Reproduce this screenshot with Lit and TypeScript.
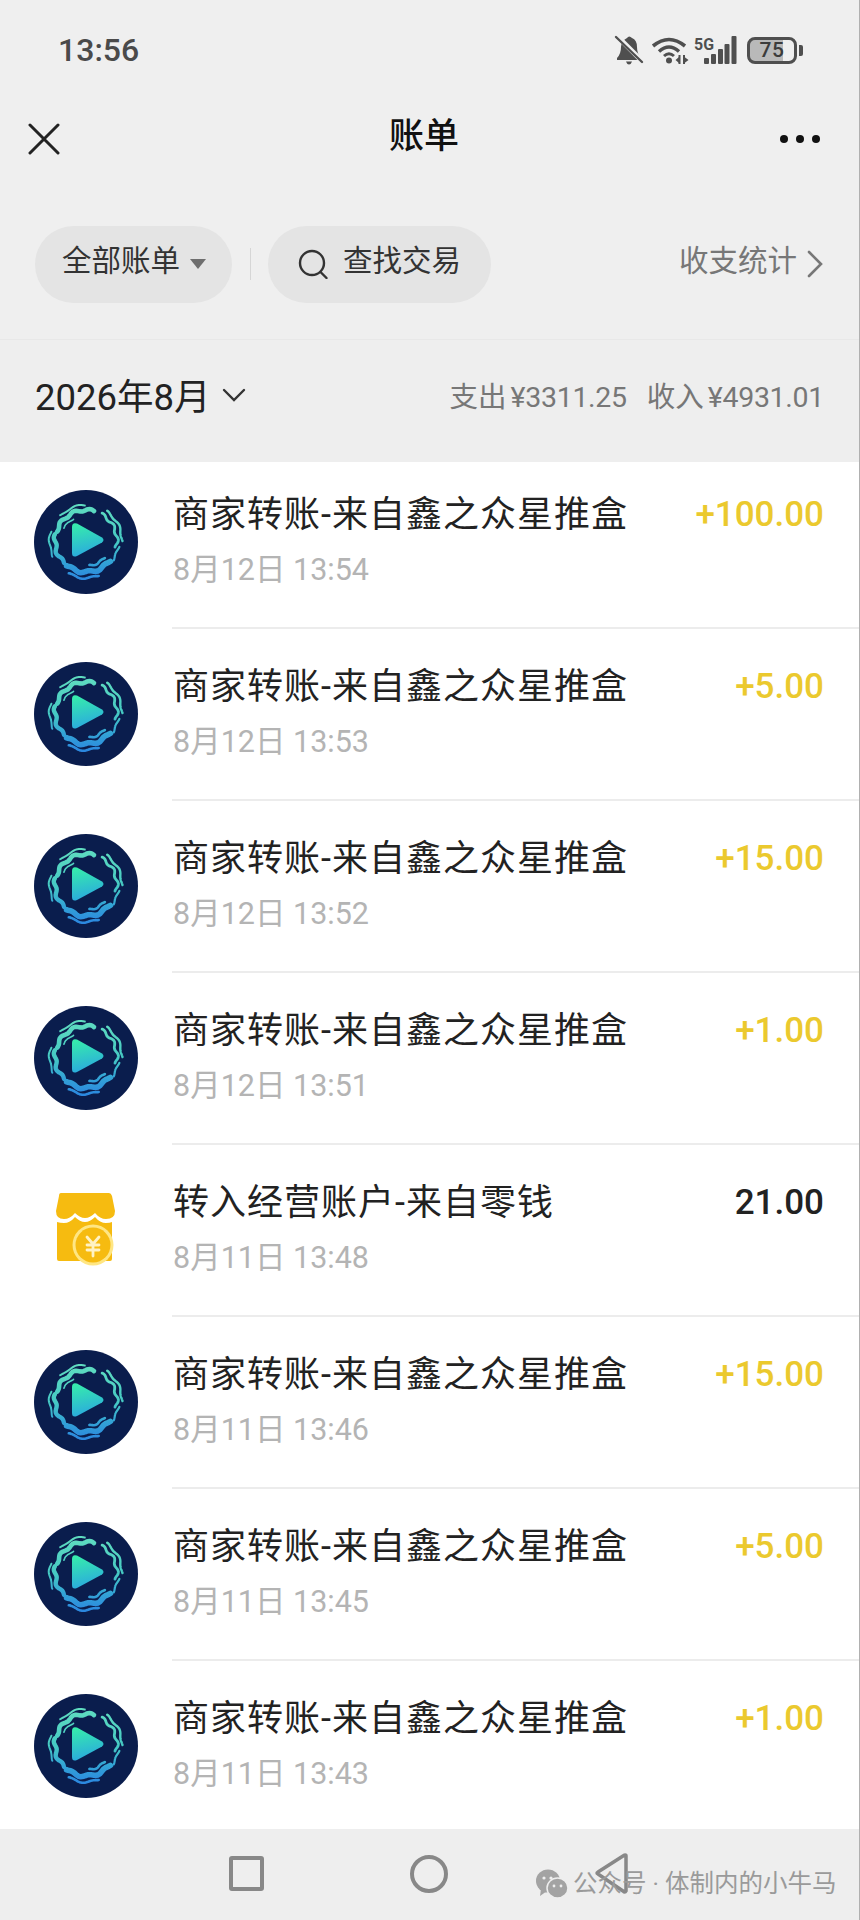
import { LitElement, html, css, svg } from "lit";
import { customElement } from "lit/decorators.js";

function wave(r: number, a: number, k: number, t0: number, t1: number, phase = 0): string {
  const pts: string[] = [];
  const n = 40;
  for (let i = 0; i <= n; i++) {
    const t = ((t0 + ((t1 - t0) * i) / n) * Math.PI) / 180;
    const rr = r + a * Math.sin(k * t + phase);
    pts.push(`${(52 + rr * Math.cos(t)).toFixed(1)},${(51 + rr * Math.sin(t)).toFixed(1)}`);
  }
  return "M" + pts.join("L");
}

const strands: [number, number, number, number, number, number, number][] = [
  [31, 1.2, 12, 198, 285, 0, 4.6],
  [36, 0.8, 10, 225, 268, 1, 2.0],
  [25.5, 0.6, 10, 210, 240, 1, 1.6],
  [31, 1.4, 13, 300, 372, 2, 2.8],
  [36, 1.0, 12, 305, 360, 0.5, 2.4],
  [31, 1.2, 11, 40, 128, 1, 5.6],
  [37, 1.0, 11, 70, 118, 2, 2.6],
  [25, 0.8, 12, 42, 82, 0, 2.6],
  [33, 1.0, 12, 10, 35, 0, 2.2],
  [31, 1.4, 12, 135, 192, 0, 4.4],
  [36.5, 0.8, 12, 155, 195, 1, 2.0],
];

let uid = 0;
function logo() {
  const id = `g${uid++}`;
  return html`<svg class="avatar" viewBox="0 0 104 104" aria-hidden="true">
    <defs>
      <linearGradient id="${id}r" gradientUnits="userSpaceOnUse" x1="52" y1="15" x2="52" y2="90">
        <stop offset="0" stop-color="#5fdcc0"></stop>
        <stop offset="0.5" stop-color="#45c9c4"></stop>
        <stop offset="0.75" stop-color="#33a4d6"></stop>
        <stop offset="1" stop-color="#2b86e0"></stop>
      </linearGradient>
      <linearGradient id="${id}p" x1="0.3" y1="0" x2="0.5" y2="1">
        <stop offset="0" stop-color="#36ecac"></stop>
        <stop offset="1" stop-color="#2aa8e0"></stop>
      </linearGradient>
    </defs>
    <circle cx="52" cy="52" r="52" fill="#0a1d4d"></circle>
    <g fill="none" stroke="url(#${id}r)" stroke-linecap="round">
      ${strands.map(
        (s) => svg`<path d="${wave(s[0], s[1], s[2], s[3], s[4], s[5])}" stroke-width="${s[6]}"></path>`
      )}
    </g>
    <path d="M43 33.500 L68 47.500 Q71 50 68 52.500 L43 66 Q38 68 38 63 L38 37 Q38 32 43 33.500Z" fill="url(#${id}p)"></path>
  </svg>`;
}

const shop = html`<svg class="shop" viewBox="0 0 60 74" aria-hidden="true">
  <path fill="#f6bb10" d="M5 1 H53 Q55 1 56 4 L59 19 Q59 27 50 27 Q44 27 39 21 Q34 26 29 26 Q24 26 19 21 Q14 27 8 27 Q0 27 0 19 L3 4 Q3 1 5 1Z"></path>
  <path fill="#f6bb10" d="M1 30 Q4 31 8 31 Q14 31 19 25 Q24 30 29 30 Q34 30 39 25 Q44 31 50 31 Q54 31 56 30 V67 Q56 69 54 69 H3 Q1 69 1 67Z"></path>
  <circle cx="37" cy="53" r="20.500" fill="#ffe683"></circle>
  <circle cx="37" cy="53" r="17.500" fill="#f6bb10"></circle>
  <path fill="none" stroke="#fff2c4" stroke-width="2.800" stroke-linecap="round" d="M31 45 L37 52 L43 45 M31 53 H43 M31 58 H43 M37 52 V64"></path>
</svg>`;

type Row = { title: string; date: string; amount: string; kind?: "shop" };
const T = "商家转账-来自鑫之众星推盒";
const rows: Row[] = [
  { title: T, date: "8月12日 13:54", amount: "+100.00" },
  { title: T, date: "8月12日 13:53", amount: "+5.00" },
  { title: T, date: "8月12日 13:52", amount: "+15.00" },
  { title: T, date: "8月12日 13:51", amount: "+1.00" },
  { title: "转入经营账户-来自零钱", date: "8月11日 13:48", amount: "21.00", kind: "shop" },
  { title: T, date: "8月11日 13:46", amount: "+15.00" },
  { title: T, date: "8月11日 13:45", amount: "+5.00" },
  { title: T, date: "8月11日 13:43", amount: "+1.00" },
];

@customElement("app-root")
export class AppRoot extends LitElement {
  static styles = css`
    :host {
      display: block;
      font-family: Roboto, "Noto Sans CJK SC", sans-serif;
    }
    .page {
      box-sizing: border-box;
      width: 860px;
      height: 1920px;
      display: flex;
      flex-direction: column;
      background: #efefef;
      border-right: 1px solid #b0b0b0;
      overflow: hidden;
    }
    .status {
      height: 100px;
      flex: none;
      display: flex;
      align-items: center;
      padding: 0 56px 0 58px;
    }
    .time {
      font-size: 32px;
      font-weight: 500;
      color: #4a4a4a;
      flex: 1;
    }
    .st-icons {
      display: flex;
      align-items: center;
    }
    .bell { width: 30px; height: 30px; margin-right: 7px; }
    .wifi { width: 38px; height: 28px; margin-right: 5px; }
    .net { width: 43px; height: 28px; margin-right: 10px; }
    .batt {
      box-sizing: border-box;
      width: 50px;
      height: 27px;
      border: 3px solid #4f4f4f;
      border-radius: 8px;
      background: linear-gradient(90deg, #b9b9b9 75%, transparent 75%);
      color: #3c3c3c;
      font-size: 21px;
      font-weight: 500;
      display: flex;
      align-items: center;
      justify-content: center;
      letter-spacing: 0.5px;
    }
    .nub {
      width: 4px;
      height: 11px;
      margin-left: 2px;
      background: #4f4f4f;
      border-radius: 0 2px 2px 0;
    }
    .nav {
      height: 80px;
      flex: none;
      display: grid;
      grid-template-columns: 1fr auto 1fr;
      align-items: center;
      padding: 0 39px 0 28px;
    }
    .nav svg { width: 32px; height: 32px; margin-top: -2px; }
    .title {
      font-size: 35px;
      line-height: 44px;
      font-weight: 500;
      color: #111;
      margin-top: -6px;
    }
    .dots { display: flex; gap: 8px; justify-content: flex-end; margin-top: -2px; }
    .dots i {
      width: 8px;
      height: 8px;
      border-radius: 50%;
      background: #111;
    }
    .filters {
      box-sizing: border-box;
      height: 160px;
      flex: none;
      padding: 46px 36px 37px 35px;
      display: flex;
      align-items: center;
      border-bottom: 1px solid #e8e8e8;
    }
    .pill {
      height: 77px;
      box-sizing: border-box;
      border-radius: 39px;
      background: #e4e4e4;
      display: flex;
      align-items: center;
      font-size: 29.500px;
      color: #333;
    }
    .lift { display: block; line-height: 40px; margin-top: -6px; }
    .p1 { width: 197px; padding-left: 27px; gap: 10px; }
    .caret {
      width: 0;
      height: 0;
      border-left: 8px solid transparent;
      border-right: 8px solid transparent;
      border-top: 10px solid #6e6e6e;
    }
    .vline {
      width: 1px;
      height: 32px;
      background: #d6d6d6;
      margin: 0 17px 0 18px;
    }
    .p2 { width: 223px; padding-left: 30px; gap: 15px; }
    .p2 svg { width: 30px; height: 30px; flex: none; }
    .stats {
      margin-left: auto;
      display: flex;
      align-items: center;
      gap: 10px;
      color: #777;
      font-size: 29.500px;
    }
    .stats svg { width: 16px; height: 28px; }
    .month {
      height: 122px;
      flex: none;
      display: flex;
      align-items: center;
      padding: 0 35px 14px 35px;
      box-sizing: border-box;
      background: #eeeeee;
    }
    .m-label {
      font-size: 36.500px;
      color: #222;
    }
    .m-chev { width: 24px; height: 14px; margin: 2px 0 0 11px; }
    .m-sum {
      margin-left: auto;
      display: flex;
      gap: 20px;
      font-size: 28.500px;
      color: #777;
    }
    .yen { margin-left: 4px; letter-spacing: -0.3px; }
    .list {
      flex: 1;
      min-height: 0;
      overflow: hidden;
      background: #fff;
    }
    .row {
      display: flex;
      height: 172px;
      box-sizing: border-box;
    }
    .row:first-child { height: 167px; }
    .ic {
      width: 172px;
      flex: none;
      padding: 33px 0 0 34px;
      box-sizing: border-box;
    }
    .row:first-child .ic { padding-top: 28px; }
    .avatar { display: block; width: 104px; height: 104px; }
    .shop { display: block; width: 60px; height: 74px; margin: 14px 0 0 22px; }
    .body {
      flex: 1;
      min-width: 0;
      box-sizing: border-box;
      padding: 33px 35px 0 1px;
      border-bottom: 2px solid #ececec;
      display: grid;
      grid-template-columns: 1fr auto;
      align-content: start;
    }
    .row:first-child .body { padding-top: 28px; }
    .row-title {
      font-size: 36px;
      line-height: 50px;
      letter-spacing: 1px;
      color: #222;
      white-space: nowrap;
    }
    .amt {
      font-size: 35px;
      line-height: 50px;
      font-weight: 500;
      color: #ebc92e;
    }
    .amt.plain { color: #222; }
    .date {
      grid-column: 1 / -1;
      margin-top: 10px;
      font-size: 30.500px;
      line-height: 40px;
      color: #b4b4b4;
    }
    .bottom {
      height: 91px;
      flex: none;
      position: relative;
      background: #eeeeee;
      display: flex;
      align-items: flex-start;
      padding: 27px 0 0 229px;
      box-sizing: border-box;
    }
    .sq {
      box-sizing: border-box;
      width: 35px;
      height: 35px;
      border: 4px solid #888;
      border-radius: 3px;
      margin-right: 146px;
    }
    .ci {
      box-sizing: border-box;
      width: 38px;
      height: 38px;
      border: 4px solid #888;
      border-radius: 50%;
      margin: -1px 145px 0 0;
    }
    .tri { width: 36px; height: 42px; margin-top: -3px; }
    .wm {
      position: absolute;
      left: 536px;
      top: 35px;
      display: flex;
      align-items: center;
      gap: 5px;
      font-size: 24.500px;
      color: #9a9a9a;
      white-space: nowrap;
    }
    .wm svg { width: 32px; height: 30px; margin-top: 5px; }
  `;

  render() {
    return html`<div class="page">
      <div class="status">
        <div class="time">13:56</div>
        <div class="st-icons">
          <svg class="bell" viewBox="0 0 30 30" aria-hidden="true">
            <path fill="#4f4f4f" d="M13 3 Q15 0 18 3 Q23 5 23 12 Q23 19 27 23 V25 H3 V23 Q7 19 7 12 Q7 6 13 3Z"></path>
            <path fill="#4f4f4f" d="M12 26.500 H18 Q17 29.500 15 29.500 Q13 29.500 12 26.500Z"></path>
            <path stroke="#efefef" stroke-width="5" d="M1 -1 L31 29"></path>
            <path stroke="#4f4f4f" stroke-width="2.400" stroke-linecap="round" d="M2 2 L28 27"></path>
          </svg>
          <svg class="wifi" viewBox="0 0 38 28" fill="none" aria-hidden="true">
            <path stroke="#4f4f4f" stroke-width="3.600" d="M2 10 Q18 -3 34 10"></path>
            <path stroke="#4f4f4f" stroke-width="3.400" d="M8 15.500 Q18 6.500 28 15.500"></path>
            <path stroke="#4f4f4f" stroke-width="3" d="M13 20 Q18 15.500 23 20"></path>
            <circle cx="18" cy="24.500" r="3" fill="#4f4f4f"></circle>
            <path stroke="#4f4f4f" stroke-width="2" d="M28.500 19 V28 M33 19 V28"></path>
            <path fill="#4f4f4f" d="M28 21 L24.500 24 L28 27Z M33.500 21 L37.500 24 L33.500 27Z"></path>
          </svg>
          <svg class="net" viewBox="0 0 43 28" aria-hidden="true">
            <text x="0" y="14" font-family="Roboto, sans-serif" font-size="16" font-weight="700" fill="#4f4f4f" textLength="20" lengthAdjust="spacingAndGlyphs">5G</text>
            <rect x="10" y="22" width="5" height="6" rx="1" fill="#4f4f4f"></rect>
            <rect x="17" y="18" width="5" height="10" rx="1" fill="#4f4f4f"></rect>
            <rect x="24" y="13" width="5" height="15" rx="1" fill="#4f4f4f"></rect>
            <rect x="30.500" y="8" width="5" height="20" rx="1" fill="#4f4f4f"></rect>
            <rect x="37.500" y="0" width="5" height="28" rx="1" fill="#4f4f4f"></rect>
          </svg>
          <div class="batt">75</div>
          <div class="nub"></div>
        </div>
      </div>

      <div class="nav">
        <svg viewBox="0 0 32 32" aria-hidden="true">
          <path d="M2 2 L30 30 M30 2 L2 30" stroke="#222" stroke-width="3" stroke-linecap="round"></path>
        </svg>
        <div class="title">账单</div>
        <div class="dots"><i></i><i></i><i></i></div>
      </div>

      <div class="filters">
        <div class="pill p1"><span class="lift">全部账单</span><span class="caret"></span></div>
        <div class="vline"></div>
        <div class="pill p2">
          <svg viewBox="0 0 30 30" fill="none" stroke="#333" stroke-width="2.400" aria-hidden="true">
            <circle cx="14" cy="14" r="12"></circle>
            <path d="M22.500 23 L28.500 29" stroke-linecap="round"></path>
          </svg>
          <span class="lift">查找交易</span>
        </div>
        <div class="stats">
          <span class="lift">收支统计</span>
          <svg viewBox="0 0 16 28" fill="none" stroke="#777" stroke-width="2.600" aria-hidden="true">
            <path d="M2 2 L14 14 L2 26" stroke-linecap="round"></path>
          </svg>
        </div>
      </div>

      <div class="month">
        <span class="m-label">2026年8月</span>
        <svg class="m-chev" viewBox="0 0 24 14" fill="none" stroke="#333" stroke-width="2.400" aria-hidden="true">
          <path d="M2 2 L12 12 L22 2" stroke-linecap="round"></path>
        </svg>
        <div class="m-sum">
          <span>支出<span class="yen">¥3311.25</span></span>
          <span>收入<span class="yen">¥4931.01</span></span>
        </div>
      </div>

      <div class="list">
        ${rows.map(
          (r) => html`<div class="row">
            <div class="ic">${r.kind === "shop" ? shop : logo()}</div>
            <div class="body">
              <div class="row-title">${r.title}</div>
              <div class="amt ${r.kind === "shop" ? "plain" : ""}">${r.amount}</div>
              <div class="date">${r.date}</div>
            </div>
          </div>`
        )}
      </div>

      <div class="bottom">
        <div class="sq"></div>
        <div class="ci"></div>
        <svg class="tri" viewBox="0 0 36 42" fill="none" stroke="#888" stroke-width="3.500" aria-hidden="true">
          <path d="M33 3 L33 38 Q32 40 30 38 L5 21 Q3 20 5 19 L30 3 Q33 1 33 3Z" stroke-linejoin="round"></path>
        </svg>
        <div class="wm">
          <svg viewBox="0 0 32 30" aria-hidden="true">
            <ellipse cx="12" cy="12" rx="12" ry="11.500" fill="#a3a3a3"></ellipse>
            <path d="M5 20 L4 27 L11 22Z" fill="#a3a3a3"></path>
            <ellipse cx="21.500" cy="19" rx="10.500" ry="10" fill="#a3a3a3" stroke="#eeeeee" stroke-width="1.500"></ellipse>
            <circle cx="8" cy="9" r="1.600" fill="#eee"></circle>
            <circle cx="15" cy="9" r="1.600" fill="#eee"></circle>
            <circle cx="18" cy="17" r="1.400" fill="#eee"></circle>
            <circle cx="25" cy="17" r="1.400" fill="#eee"></circle>
          </svg>
          公众号 · 体制内的小牛马
        </div>
      </div>
    </div>`;
  }
}
